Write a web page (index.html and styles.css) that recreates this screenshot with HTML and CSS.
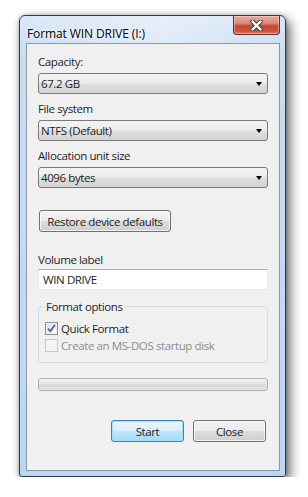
FILE: index.html
```html
<!DOCTYPE html>
<html>
<head>
  <title>Format WIN DRIVE (I:)</title>
  <link rel="stylesheet" href="styles.css">
</head>

<body>
  <div class="window">
    <div class="titlebar">
      <span class="title">Format WIN DRIVE (I:)</span>
      <div class="closeBox">
        <svg width="13" height="11" viewBox="0 0 13 11">
          <path d="M2.5 1.5 L10.5 9.5 M10.5 1.5 L2.5 9.5" stroke="#40403f" stroke-width="4.4" stroke-linecap="round"/>
          <path d="M2.5 1.5 L10.5 9.5 M10.5 1.5 L2.5 9.5" stroke="#fff" stroke-width="2.4" stroke-linecap="round"/>
        </svg>
      </div>
    </div>

    <div class="client">
      <div class="label">Capacity:</div>
      <div class="combo"><span>67.2 GB</span><i class="arrow"></i></div>

      <div class="label">File system</div>
      <div class="combo"><span>NTFS (Default)</span><i class="arrow"></i></div>

      <div class="label">Allocation unit size</div>
      <div class="combo"><span>4096 bytes</span><i class="arrow"></i></div>

      <div class="btn restore">Restore device defaults</div>

      <div class="label volLabel">Volume label</div>
      <div class="textbox">WIN DRIVE</div>

      <fieldset class="group">
        <legend>Format options</legend>
        <div class="check">
          <span class="box checked">
            <svg width="11" height="11" viewBox="0 0 11 11">
              <path d="M2 5.5 L4.3 8.3 L9 1.8" stroke="#4a5f97" stroke-width="1.8" fill="none"/>
            </svg>
          </span>
          Quick Format
        </div>
        <div class="check disabled">
          <span class="box"></span>
          Create an MS-DOS startup disk
        </div>
      </fieldset>

      <div class="progress"></div>

      <div class="buttons">
        <div class="btn default">Start</div>
        <div class="btn">Close</div>
      </div>
    </div>
  </div>
</body>
</html>
```

FILE: styles.css
```css
body {margin: 0; padding: 15px 0 0 19px; background: #fff; font-family: 'Open Sans', sans-serif; font-size: 11.5px; letter-spacing: -0.4px; color: #1e1e1e;}

/* window frame */
.window {width: 267px; box-sizing: border-box; border: 1px solid #2f3b4a; border-radius: 6px 6px 3px 3px; padding: 0 5px 5px 6px;
  background: linear-gradient(180deg, #dbe8f6 0px, #c9ddf2 40px, #bcd6f1 100%);
  box-shadow: 4px 5px 12px rgba(0,0,0,0.6), 0 0 4px rgba(0,0,0,0.25);}
.titlebar {height: 27px; display: flex; align-items: flex-start; justify-content: space-between;
  background: linear-gradient(90deg, rgba(255,255,255,0) 0%, rgba(255,255,255,0.35) 55%, rgba(255,255,255,0) 100%);}
.title {margin: 10px 0 0 1px; line-height: 15px; font-size: 12px; letter-spacing: -0.1px; color: #000; text-shadow: 0 0 6px #fff, 0 0 3px #fff;}
.closeBox {width: 45px; height: 18px; display: flex; align-items: center; justify-content: center;
  border: 1px solid #6a2b22; border-top: none; border-radius: 0 0 4px 4px;
  background: linear-gradient(180deg, #e9aa9c 0%, #d88b7a 40%, #c6452f 55%, #c85640 85%, #d9826c 100%);
  box-shadow: inset 0 0 0 1px rgba(255,255,255,0.35);}
.closeBox svg {display: block;}

/* client area */
.client {border: 1px solid #8a99a8; background: #f0f0f0; padding: 10px 11px 28px 11px;}
.label {line-height: 15px; margin-bottom: 4px;}
.combo {height: 21px; box-sizing: border-box; margin-bottom: 7px; border: 1px solid #7a7a7a; border-radius: 3px;
  display: flex; align-items: center; justify-content: space-between; padding: 0 5px 0 2px;
  background: linear-gradient(180deg, #f3f3f3 0%, #ececec 48%, #dedede 52%, #d3d3d3 100%);}
.arrow {width: 0; height: 0; border-left: 3.5px solid transparent; border-right: 3.5px solid transparent; border-top: 4px solid #000; margin-top: 1px;}

.btn {height: 22px; box-sizing: border-box; border: 1px solid #707070; border-radius: 3px; display: flex; align-items: center; justify-content: center;
  background: linear-gradient(180deg, #f2f2f2 0%, #ebebeb 48%, #dddddd 52%, #cfcfcf 100%);
  box-shadow: inset 0 0 0 1px rgba(255,255,255,0.7);}
.restore {width: 132px; margin: 22px 0 0 1px;}

.volLabel {margin-top: 20px; margin-bottom: 2px;}
.textbox {height: 21px; box-sizing: border-box; border: 1px solid #e2e8ee; border-top-color: #abadb3; background: #fff; padding: 2px 0 0 4px; line-height: 15px;}

.group {margin: 9px 0 0 0; padding: 6px 5px 8px 5px; border: 1px solid #d5dfe5; border-radius: 3px;}
.group legend {padding: 0 2px; line-height: 15px;}
.check {height: 17px; display: flex; align-items: center; gap: 3px; line-height: 15px; padding-left: 1px;}
.box {width: 13px; height: 13px; box-sizing: border-box; border: 1px solid #8e8f8f; display: flex; align-items: center; justify-content: center;
  background: linear-gradient(135deg, #dcdcdc 0%, #f4f4f4 70%, #ffffff 100%); box-shadow: inset 0 0 0 1px #f4f4f4;}
.disabled {color: #8d8d8d;}
.disabled .box {border-color: #c6c6c6; background: #f4f4f4;}

.progress {height: 13px; box-sizing: border-box; margin-top: 15px; border: 1px solid #b2b2b2; border-radius: 3px;
  background: linear-gradient(180deg, #f3f3f3 0%, #e3e3e3 45%, #d7d7d7 55%, #e6e6e6 100%);}

.buttons {display: flex; justify-content: flex-end; gap: 9px; margin-top: 29px; padding-right: 2px;}
.buttons .btn {width: 73px;}
.buttons .default {border-color: #3c7fb1; background: linear-gradient(180deg, #eaf6fd 0%, #d9f0fc 48%, #bee6fd 52%, #a7d9f5 100%);
  box-shadow: inset 0 0 0 1px #9fe2f9;}
```
